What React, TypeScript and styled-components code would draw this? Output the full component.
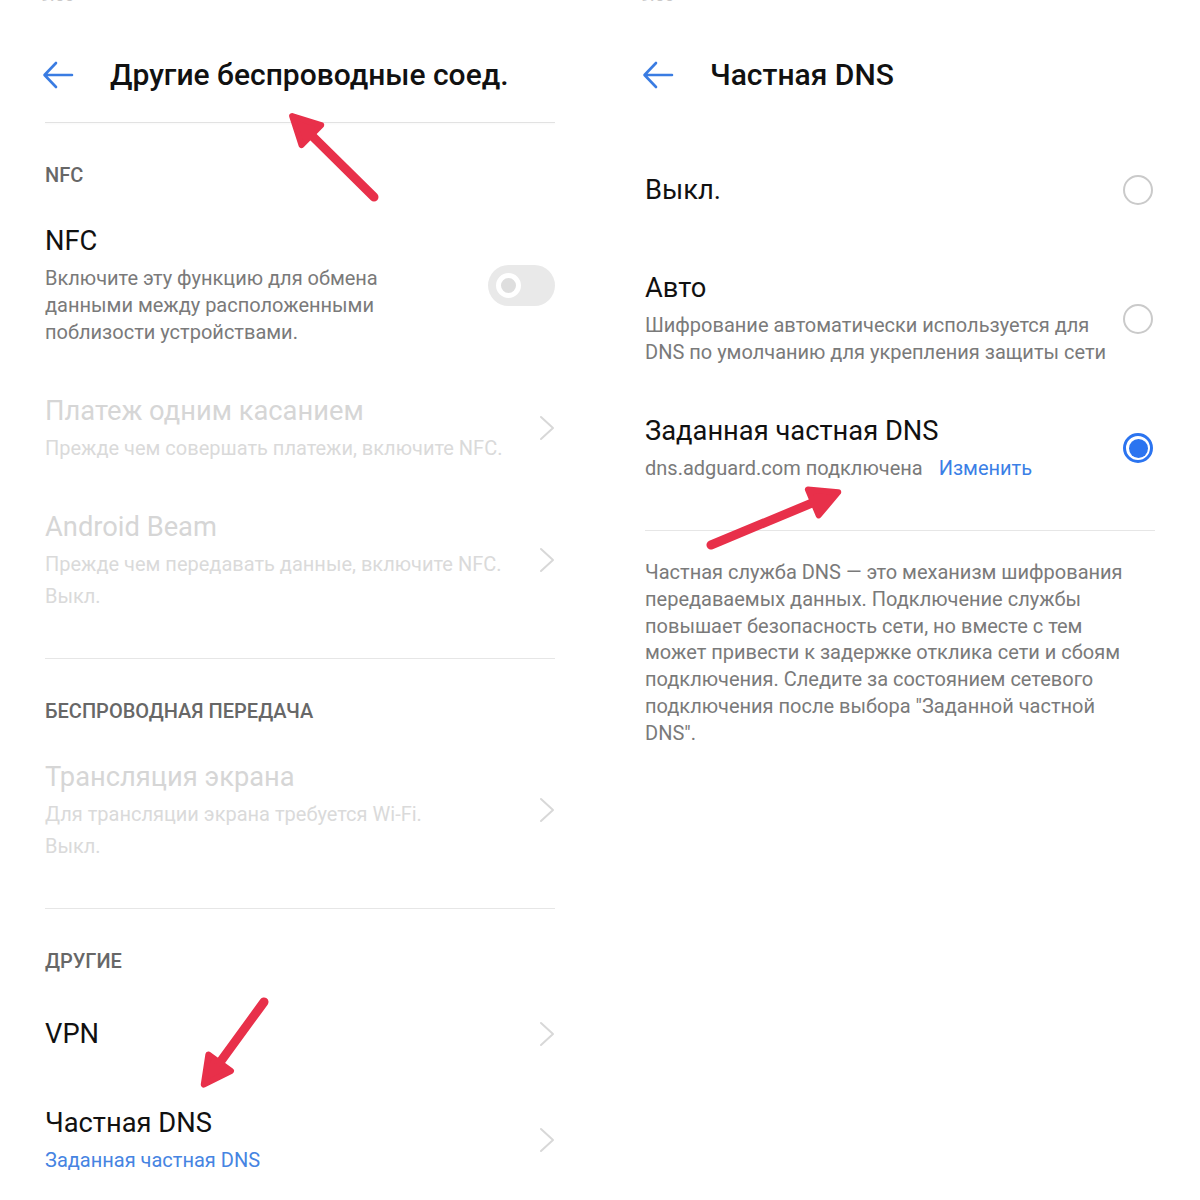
import { createGlobalStyle, styled } from "styled-components";

const GlobalStyle = createGlobalStyle`
  html, body {
    margin: 0;
    padding: 0;
    background: #fff;
  }
  body {
    font-family: Roboto, "Noto Sans", sans-serif;
    -webkit-font-smoothing: antialiased;
  }
`;

const Page = styled.div`
  position: relative;
  width: 1200px;
  height: 1200px;
  display: grid;
  grid-template-columns: 600px 600px;
  overflow: hidden;
  background: #fff;
`;

const Panel = styled.section`
  display: flex;
  flex-direction: column;
  min-width: 0;
`;

const StatusClip = styled.div`
  height: 5px;
  overflow: hidden;
  padding-left: 40px;

  span {
    display: block;
    margin-top: -14px;
    font-size: 18px;
    line-height: 18px;
    color: #c8c8c8;
  }
`;

const Header = styled.header`
  display: flex;
  align-items: center;
  gap: 36px;
  height: 117px;
  box-sizing: border-box;
  padding: 22px 0 0 42px;
`;

const HeaderTitle = styled.h1`
  margin: 0;
  font-size: 30px;
  line-height: 36px;
  font-weight: 500;
  color: #111;
`;

const HeaderRule = styled.div<{ $visible: boolean }>`
  height: 1px;
  margin: 0 45px;
  background: ${(p) => (p.$visible ? "#e2e2e2" : "transparent")};
  box-shadow: ${(p) => (p.$visible ? "0 1px 2px rgba(0, 0, 0, 0.04)" : "none")};
`;

const List = styled.div<{ $top?: number }>`
  display: flex;
  flex-direction: column;
  padding: ${(p) => p.$top ?? 0}px 45px 0;
`;

const SectionLabel = styled.div`
  padding-top: 40px;
  margin-bottom: 13px;
  font-size: 20px;
  line-height: 24px;
  font-weight: 500;
  color: #676767;
`;

const Row = styled.div<{ $min?: number }>`
  display: flex;
  align-items: center;
  gap: 12px;
  padding: 24px 0;
  min-height: ${(p) => p.$min ?? 0}px;
`;

const RowText = styled.div`
  flex: 1;
  min-width: 0;
`;

const Title = styled.div<{ $disabled?: boolean }>`
  font-size: 27.3px;
  line-height: 34px;
  white-space: nowrap;
  color: ${(p) => (p.$disabled ? "#d6d6d6" : "#111")};
`;

const Sub = styled.div<{ $disabled?: boolean; $link?: boolean }>`
  margin-top: 7px;
  font-size: 20px;
  line-height: 27px;
  white-space: nowrap;
  color: ${(p) => (p.$link ? "#4684e2" : p.$disabled ? "#dadada" : "#7a7a7a")};

  & + & {
    margin-top: 5px;
  }
`;

const Link = styled.span`
  margin-left: 16px;
  color: #3b7fe6;
`;

const Divider = styled.div`
  height: 1px;
  margin-top: 24px;
  background: #e6e6e6;
`;

const Toggle = styled.span`
  position: relative;
  flex: none;
  width: 67px;
  height: 41px;
  border-radius: 21px;
  background: #e9e9e9;

  &::after {
    content: "";
    position: absolute;
    left: 8px;
    top: 8px;
    width: 25px;
    height: 25px;
    box-sizing: border-box;
    border-radius: 50%;
    border: 5px solid #fff;
    background: #dedede;
  }
`;

const Radio = styled.span<{ $checked?: boolean }>`
  flex: none;
  display: flex;
  align-items: center;
  justify-content: center;
  width: 30px;
  height: 30px;
  margin-right: 2px;
  box-sizing: border-box;
  border-radius: 50%;
  border: ${(p) => (p.$checked ? "3px solid #2b74f0" : "2px solid #cacaca")};

  &::after {
    content: "";
    display: ${(p) => (p.$checked ? "block" : "none")};
    width: 19px;
    height: 19px;
    border-radius: 50%;
    background: #2b74f0;
  }
`;

const Paragraph = styled.p`
  margin: 28px 0 0;
  font-size: 20px;
  line-height: 26.8px;
  white-space: nowrap;
  color: #7a7a7a;
`;

const Overlay = styled.svg`
  position: absolute;
  inset: 0;
  pointer-events: none;
`;

function BackIcon() {
  return (
    <svg width="32" height="28" viewBox="0 0 32 28" fill="none">
      <path
        d="M30 14H3M14 2L2.5 14 14 26"
        stroke="#3a7ce2"
        strokeWidth="2.6"
        strokeLinecap="round"
        strokeLinejoin="round"
      />
    </svg>
  );
}

function Chevron() {
  return (
    <svg width="16" height="26" viewBox="0 0 16 26" fill="none" style={{ flex: "none" }}>
      <path d="M2 2L14 13 2 24" stroke="#d8d8d8" strokeWidth="2" strokeLinecap="round" strokeLinejoin="round" />
    </svg>
  );
}

type Pt = [number, number];

function PointerArrow({ tail, tip }: { tail: Pt; tip: Pt }) {
  const dx = tip[0] - tail[0];
  const dy = tip[1] - tail[1];
  const len = Math.hypot(dx, dy);
  const ux = dx / len;
  const uy = dy / len;
  const nx = -uy;
  const ny = ux;
  const t: Pt = [tip[0] - ux * 3, tip[1] - uy * 3];
  const base: Pt = [t[0] - ux * 27, t[1] - uy * 27];
  const w1: Pt = [base[0] + nx * 14, base[1] + ny * 14];
  const w2: Pt = [base[0] - nx * 14, base[1] - ny * 14];
  const shaftEnd: Pt = [base[0] + ux * 6, base[1] + uy * 6];
  return (
    <g stroke="#e8304a" fill="#e8304a" strokeLinecap="round" strokeLinejoin="round">
      <line x1={tail[0]} y1={tail[1]} x2={shaftEnd[0]} y2={shaftEnd[1]} strokeWidth="9" />
      <polygon points={[t, w1, w2].map((p) => p.join(",")).join(" ")} strokeWidth="6" />
    </g>
  );
}

export default function App() {
  return (
    <>
      <GlobalStyle />
      <Page>
        <Panel>
          <StatusClip>
            <span>9:50</span>
          </StatusClip>
          <Header>
            <BackIcon />
            <HeaderTitle>Другие беспроводные соед.</HeaderTitle>
          </Header>
          <HeaderRule $visible />
          <List>
            <SectionLabel>NFC</SectionLabel>
            <Row>
              <RowText>
                <Title>NFC</Title>
                <Sub>
                  Включите эту функцию для обмена
                  <br />
                  данными между расположенными
                  <br />
                  поблизости устройствами.
                </Sub>
              </RowText>
              <Toggle />
            </Row>
            <Row>
              <RowText>
                <Title $disabled>Платеж одним касанием</Title>
                <Sub $disabled>Прежде чем совершать платежи, включите NFC.</Sub>
              </RowText>
              <Chevron />
            </Row>
            <Row>
              <RowText>
                <Title $disabled>Android Beam</Title>
                <Sub $disabled>Прежде чем передавать данные, включите NFC.</Sub>
                <Sub $disabled>Выкл.</Sub>
              </RowText>
              <Chevron />
            </Row>
            <Divider />
            <SectionLabel>БЕСПРОВОДНАЯ ПЕРЕДАЧА</SectionLabel>
            <Row>
              <RowText>
                <Title $disabled>Трансляция экрана</Title>
                <Sub $disabled>Для трансляции экрана требуется Wi-Fi.</Sub>
                <Sub $disabled>Выкл.</Sub>
              </RowText>
              <Chevron />
            </Row>
            <Divider />
            <SectionLabel>ДРУГИЕ</SectionLabel>
            <Row $min={48}>
              <RowText>
                <Title>VPN</Title>
              </RowText>
              <Chevron />
            </Row>
            <Row>
              <RowText>
                <Title>Частная DNS</Title>
                <Sub $link>Заданная частная DNS</Sub>
              </RowText>
              <Chevron />
            </Row>
          </List>
        </Panel>

        <Panel>
          <StatusClip>
            <span>9:50</span>
          </StatusClip>
          <Header>
            <BackIcon />
            <HeaderTitle>Частная DNS</HeaderTitle>
          </Header>
          <HeaderRule $visible={false} />
          <List $top={10}>
            <Row $min={66}>
              <RowText>
                <Title>Выкл.</Title>
              </RowText>
              <Radio />
            </Row>
            <Row>
              <RowText>
                <Title>Авто</Title>
                <Sub>
                  Шифрование автоматически используется для
                  <br />
                  DNS по умолчанию для укрепления защиты сети
                </Sub>
              </RowText>
              <Radio />
            </Row>
            <Row>
              <RowText>
                <Title>Заданная частная DNS</Title>
                <Sub>
                  dns.adguard.com подключена<Link>Изменить</Link>
                </Sub>
              </RowText>
              <Radio $checked />
            </Row>
            <Divider />
            <Paragraph>
              Частная служба DNS — это механизм шифрования
              <br />
              передаваемых данных. Подключение службы
              <br />
              повышает безопасность сети, но вместе с тем
              <br />
              может привести к задержке отклика сети и сбоям
              <br />
              подключения. Следите за состоянием сетевого
              <br />
              подключения после выбора "Заданной частной
              <br />
              DNS".
            </Paragraph>
          </List>
        </Panel>

        <Overlay width="1200" height="1200" viewBox="0 0 1200 1200">
          <PointerArrow tail={[374, 197]} tip={[290, 114]} />
          <PointerArrow tail={[711, 545]} tip={[841, 491]} />
          <PointerArrow tail={[264, 1002]} tip={[202, 1087]} />
        </Overlay>
      </Page>
    </>
  );
}
